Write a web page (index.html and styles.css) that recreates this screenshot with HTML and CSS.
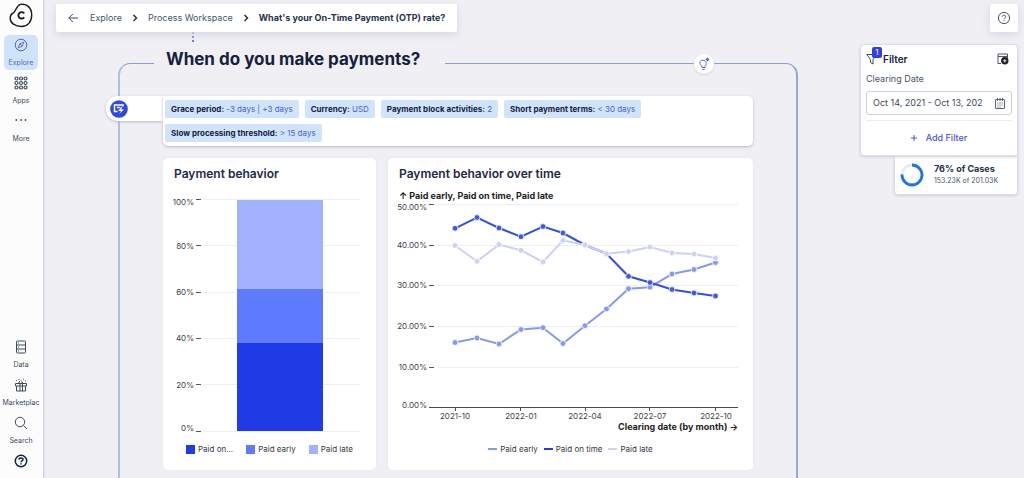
FILE: index.html
```html
<!DOCTYPE html>
<html lang="en">
<head>
<meta charset="utf-8">
<title>What's your On-Time Payment (OTP) rate?</title>
<link rel="stylesheet" href="styles.css">
</head>
<body>
<nav class="sidebar" aria-label="Main">
  <svg class="logo" width="24" height="25" viewBox="0 0 24 25" fill="none"><path d="M3.500 10.500C7 9 7 2.500 11.500 1.400C18 .2 22.700 5 22.700 12C22.700 19 18.500 23.500 12.500 23.500C6 23.500 1.200 20 1.200 15.500C1.200 13 1.800 11.300 3.500 10.500Z" stroke="#1c1c22" stroke-width="1.400"/><path d="M15.200 10.500A3.200 3.200 0 1 0 15.200 14.200" stroke="#1c1c22" stroke-width="1.900"/></svg>
  <div class="group">
    <a class="item active" href="#"><svg width="14" height="14" viewBox="0 0 14 14" fill="none" stroke="currentColor"><circle cx="7" cy="7" r="5.800"/><path d="M10 4L8.200 8.200L4 10L5.800 5.800ZM6 6L8 8" stroke-width=".9"/></svg><span>Explore</span></a>
    <a class="item" href="#"><svg width="14" height="14" viewBox="0 0 14 14" fill="none" stroke="currentColor" stroke-width="1.200"><circle cx="2.500" cy="2.500" r="1.500"/><circle cx="7" cy="2.500" r="1.500"/><circle cx="11.500" cy="2.500" r="1.500"/><circle cx="2.500" cy="7" r="1.500"/><circle cx="7" cy="7" r="1.500"/><circle cx="11.500" cy="7" r="1.500"/><circle cx="2.500" cy="11.500" r="1.500"/><circle cx="7" cy="11.500" r="1.500"/><circle cx="11.500" cy="11.500" r="1.500"/></svg><span>Apps</span></a>
    <a class="item" href="#"><svg width="14" height="14" viewBox="0 0 14 14" fill="currentColor"><circle cx="2.300" cy="6" r=".9"/><circle cx="7" cy="6" r=".9"/><circle cx="11.500" cy="6" r=".9"/></svg><span>More</span></a>
  </div>
  <div class="group bottom">
    <a class="item" href="#"><svg width="14" height="14" viewBox="0 0 14 14" fill="none" stroke="currentColor"><rect x="2.500" y="1" width="9" height="12" rx=".8"/><path d="M2.500 5H11.500M2.500 9H11.500M4 3H5M4 7H5M4 11H5"/></svg><span>Data</span></a>
    <a class="item" href="#"><svg width="14" height="14" viewBox="0 0 14 14" fill="none" stroke="currentColor"><path d="M1.500 5.500H12.500V8H1.500ZM2.500 8V13H11.500V8M6 5.500V13M8.500 5.500V13M4.500 4.500L6.500 5.500L9 4.500"/><path d="M2 2.500H3M4.500 1.500H5.500M7 3H8M9 1.200H10M11 3H12M5 3.500H6" stroke-width=".9"/></svg><span>Marketplac</span></a>
    <a class="item" href="#"><svg width="14" height="14" viewBox="0 0 14 14" fill="none" stroke="currentColor"><circle cx="6" cy="6" r="4.700"/><path d="M9.500 9.500L13 13"/></svg><span>Search</span></a>
    <a class="item" href="#" aria-label="Help"><svg width="14" height="14" viewBox="0 0 14 14" fill="none" stroke="#14213d" stroke-width="1.500"><circle cx="7" cy="7" r="5.700"/><path d="M5 5.600C5.100 3.300 9 3.400 9 5.500C9 6.900 7 6.800 7 8.300M7 9.300V10.600"/></svg></a>
  </div>
</nav>
<main class="main">
  <header class="topbar">
    <nav class="crumbs" aria-label="Breadcrumb">
      <button class="plain" aria-label="Back"><svg width="10" height="10" viewBox="0 0 10 10" fill="none" stroke="#3d4a5f"><path d="M10 5H.8M4.800 1L.8 5L4.800 9"/></svg></button>
      <a href="#">Explore</a>
      <svg width="6" height="8" viewBox="0 0 6 8" fill="none" stroke="#25324a" stroke-width="1.500"><path d="M1.500 1L4.500 4L1.500 7"/></svg>
      <a href="#">Process Workspace</a>
      <svg width="6" height="8" viewBox="0 0 6 8" fill="none" stroke="#25324a" stroke-width="1.500"><path d="M1.500 1L4.500 4L1.500 7"/></svg>
      <strong>What's your On-Time Payment (OTP) rate?</strong>
    </nav>
    <button class="help" aria-label="Help"><svg width="14" height="14" viewBox="0 0 14 14" fill="none" stroke="#48556a"><circle cx="7" cy="7" r="5.600"/><path d="M5.200 5.700C5.200 3.600 8.800 3.700 8.800 5.600C8.800 6.900 7 6.900 7 8.200M7 9.300V10.300"/></svg></button>
  </header>
  <div class="content">
    <section class="board">
      <div class="connector"></div>
      <h1>When do you make payments?</h1>
      <button class="insight" aria-label="Insights"><svg width="12" height="14" viewBox="0 0 12 14" fill="none" stroke="#4a5ac8" stroke-width=".9"><path d="M4 10.500V9.200C.5 7 1.800 3.200 5 3.200C8.200 3.200 9.500 7 7 9.200V10.500ZM4.300 12.500H6.700"/><path d="M9.500 .8V4.200M7.800 2.500H11.200" stroke-width="1.300"/></svg></button>
      <div class="params">
        <div class="pill"><svg width="18" height="18" viewBox="0 0 18 18"><circle cx="9" cy="9" r="8.800" fill="#2e48e2"/><path d="M13 6.500V5H4.500V11.500H7.500M7 7.500H10.500" fill="none" stroke="#fff" stroke-width="1.500"/><path d="M12 6.500L8 11H11L9 14L14 9.500H11.500Z" fill="#fff"/></svg></div>
        <div class="chips">
          <span class="chip"><b>Grace period:</b> -3 days | +3 days</span>
          <span class="chip"><b>Currency:</b> USD</span>
          <span class="chip"><b>Payment block activities:</b> 2</span>
          <span class="chip"><b>Short payment terms:</b> &lt; 30 days</span>
          <span class="chip"><b>Slow processing threshold:</b> &gt; 15 days</span>
        </div>
      </div>
      <div class="cards">
        <article class="card">
          <h2>Payment behavior</h2>
          <svg class="chart" viewBox="163 186 213 252" role="img" aria-label="Payment behavior">
            <path class="grid" d="M204 199.500H360M204 245.500H360M204 292.500H360M204 338.500H360M204 384.500H360M204 431.500H360"/>
            <path class="tick" d="M196 199.500H201M196 245.500H201M196 292.500H201M196 338.500H201M196 384.500H201M196 431.500H201"/>
            <g class="axis end"><text x="194" y="205">100%</text><text x="194" y="249">80%</text><text x="194" y="295">60%</text><text x="194" y="341">40%</text><text x="194" y="388">20%</text><text x="194" y="431">0%</text></g>
            <rect x="237" y="200" width="86" height="89" fill="#a2b2fd"/>
            <rect x="237" y="289" width="86" height="54" fill="#5e7afd"/>
            <rect x="237" y="343" width="86" height="88" fill="#203ae6"/>
          </svg>
          <ul class="legend">
            <li><i class="box on"></i>Paid on...</li>
            <li><i class="box early"></i>Paid early</li>
            <li><i class="box late"></i>Paid late</li>
          </ul>
        </article>
        <article class="card">
          <h2>Payment behavior over time</h2>
          <svg class="chart" viewBox="388 186 365 252" role="img" aria-label="Payment behavior over time">
            <text class="axis-title" x="399" y="199">↑ Paid early, Paid on time, Paid late</text>
            <path class="grid" d="M438 204.500H738M438 245.500H738M438 285.500H738M438 326.500H738M438 367.500H738"/>
            <path class="tick" d="M429 204.500H434M429 245.500H434M429 285.500H434M429 326.500H434M429 367.500H434"/>
            <path class="base" d="M429 407.500H738M455.500 407V411M520.500 407V411M585.500 407V411M649.500 407V411M715.500 407V411"/>
            <g class="axis end"><text x="427" y="210">50.00%</text><text x="427" y="248">40.00%</text><text x="427" y="288">30.00%</text><text x="427" y="329">20.00%</text><text x="427" y="370">10.00%</text><text x="427" y="408">0.00%</text></g>
            <g class="axis mid"><text x="455" y="419">2021-10</text><text x="521" y="419">2022-01</text><text x="585" y="419">2022-04</text><text x="650" y="419">2022-07</text><text x="716" y="419">2022-10</text></g>
            <text class="axis-title end" x="738" y="430">Clearing date (by month) →</text>
            <defs>
              <marker id="dot" markerWidth="7" markerHeight="7" refX="3.500" refY="3.500" markerUnits="userSpaceOnUse"><circle cx="3.500" cy="3.500" r="2.900" fill="#4059e2" stroke="#fff" stroke-width=".8"/></marker>
              <marker id="dot-early" markerWidth="7" markerHeight="7" refX="3.500" refY="3.500" markerUnits="userSpaceOnUse"><circle cx="3.500" cy="3.500" r="2.900" fill="#8799ec" stroke="#fff" stroke-width=".8"/></marker>
              <marker id="dot-late" markerWidth="7" markerHeight="7" refX="3.500" refY="3.500" markerUnits="userSpaceOnUse"><circle cx="3.500" cy="3.500" r="2.900" fill="#cdd1f6" stroke="#fff" stroke-width=".8"/></marker>
            </defs>
            <polyline class="series early-line" points="455,342.500 477,338 499,344 521,329.500 543,327.700 563,343.500 585,325.700 606.500,309 628.500,288.700 650,287.200 672,274 694,269.500 715.500,262.500"/>
            <polyline class="series on-line" points="455,228.300 477,217.500 499,228 521,236.700 543,226.500 563,233 585,245 606.500,253.700 628.500,276.300 650,282.500 672,289.500 694,293 715.500,296"/>
            <polyline class="series late-line" points="455,245.500 477,261.300 499,244.600 521,250.300 543,262 563,240.300 585,245 606.500,253.800 628.500,251.600 650,247 672,253 694,254 715.500,258"/>
          </svg>
          <ul class="legend lines">
            <li><i class="line early"></i>Paid early</li>
            <li><i class="line on"></i>Paid on time</li>
            <li><i class="line late"></i>Paid late</li>
          </ul>
        </article>
      </div>
    </section>
    <aside class="side">
      <section class="filter">
        <div class="filter-head">
          <span class="funnel"><svg width="12" height="12" viewBox="0 0 12 12" fill="none" stroke="#3d4a5f"><path d="M.8 1.500H10.500L7 6.500V11L4.500 9.500V6.500Z"/></svg><span class="badge">1</span></span>
          <h3>Filter</h3>
          <button class="plain" aria-label="Saved filters"><svg width="12" height="12" viewBox="0 0 12 12"><path d="M4 10.500H1V1H10.500V5M1 3.500H10.500" fill="none" stroke="#50545c"/><circle cx="7.800" cy="7.800" r="3.700" fill="#1c1d22"/><path d="M7.800 6V9.600M6 7.800H9.600" stroke="#fff" stroke-width=".8"/></svg></button>
        </div>
        <label for="date">Clearing Date</label>
        <div class="field">
          <input id="date" type="text" value="Oct 14, 2021 - Oct 13, 202">
          <svg width="10" height="11" viewBox="0 0 10 11" fill="none" stroke="#58647a"><rect x=".5" y="1.500" width="9" height="9" rx=".5"/><path d="M2.500 0V3M5 0V3M7.500 0V3"/><path d="M2.500 5H8M2.500 7H8M2.500 9H6" stroke-dasharray="1 1"/></svg>
        </div>
        <button class="add"><svg width="6" height="6" viewBox="0 0 6 6" stroke="#4a54da"><path d="M3 0V6M0 3H6"/></svg>Add Filter</button>
      </section>
      <section class="cases">
        <svg width="24" height="24" viewBox="0 0 24 24" fill="none" stroke-width="2.800"><circle cx="12" cy="12" r="10" stroke="#e9ebf2"/><circle cx="12" cy="12" r="10" stroke="#1f74ea" pathLength="100" stroke-dasharray="76 24" transform="rotate(-90 12 12)"/></svg>
        <div><strong>76% of Cases</strong><small>153.23K of 201.03K</small></div>
      </section>
    </aside>
  </div>
</main>
</body>
</html>
```
FILE: styles.css
```css
* { box-sizing: border-box; }
body {
  margin: 0;
  display: flex;
  height: 100vh;
  overflow: hidden;
  background: #efeff4;
  color: #14213d;
  font: 10px/12px Inter, "Liberation Sans", sans-serif;
}
a { color: inherit; text-decoration: none; }
button { font: inherit; border: 0; padding: 0; background: none; cursor: pointer; }
svg { display: block; flex: none; }
h1, h2, h3, ul { margin: 0; padding: 0; }
.plain { display: flex; }

.sidebar {
  flex: none;
  width: 43px;
  height: 100vh;
  overflow: hidden;
  display: flex;
  flex-direction: column;
  padding: 3px 4px 0;
  background: #fcfcfd;
  box-shadow: 1px 0 2px #c9cad6;
}
.logo { margin: 0 5px 7px; }
.group { display: flex; flex-direction: column; gap: 3px; }
.bottom { margin-top: auto; margin-bottom: -8px; }
.item {
  height: 35px;
  width: 34px;
  padding-top: 3px;
  display: flex;
  flex-direction: column;
  align-items: center;
  gap: 6px;
  border-radius: 5px;
  color: #3f4a5e;
  font-size: 7px;
  line-height: 10px;
}
.item span { white-space: nowrap; }
.item.active { background: #d0e3fd; color: #5269c4; }

.main { flex: 1; min-width: 0; display: flex; flex-direction: column; }
.topbar { display: flex; justify-content: space-between; padding: 4px 6px 0 13px; z-index: 1; }
.crumbs, .help { height: 28px; background: #fff; border-radius: 2px; box-shadow: 0 3px 8px #d6d7e0; }
.crumbs { display: flex; align-items: center; gap: 10px; padding: 0 12px; color: #48556a; font-size: 9px; white-space: nowrap; }
.crumbs .plain { margin-right: 2px; }
.crumbs strong { font-weight: 700; color: #25324a; }
.help { width: 28px; display: grid; place-items: center; }

.content { flex: 1; min-height: 0; display: flex; align-items: stretch; gap: 62px; padding: 0 6px 0 75px; }
.board {
  flex: 1;
  min-width: 0;
  position: relative;
  margin-top: 31px;
  padding: 0 43px;
  border: 2px solid #b0c0e2;
  border-top: 1px solid #8f9bd8;
  border-right-color: #98a4dd;
  border-bottom: 0;
  border-radius: 12px 12px 0 0;
}
.connector { position: absolute; left: 72px; top: -32px; height: 10px; border-left: 2px dotted #6575d8; }
h1 {
  width: max-content;
  margin: -19px 0 0 -9px;
  padding: 0 25px 0 12px;
  background: #efeff4;
  font-size: 17px;
  line-height: 28px;
  font-weight: 700;
}
.insight {
  position: absolute;
  right: 82px;
  top: -10px;
  width: 20px;
  height: 20px;
  display: grid;
  place-items: center;
  border-radius: 50%;
  background: #fff;
  box-shadow: 0 1px 2px #d0d1dc;
}
.params { display: flex; align-items: flex-start; margin: 23px 0 12px -57px; }
.pill { width: 57px; height: 25px; padding: 4px; border-radius: 12px 0 0 12px; background: #fff; box-shadow: 0 1px 3px #bbbcca; }
.chips {
  flex: 1;
  display: flex;
  flex-wrap: wrap;
  gap: 6px;
  padding: 4px 100px 4px 2px;
  background: #fff;
  border-radius: 0 5px 5px 5px;
  box-shadow: 0 1px 3px #bbbcca;
  position: relative;
}
.chip { padding: 0 6px; border-radius: 2px; background: #d0e4fe; color: #4c5fd0; font-size: 8px; line-height: 18px; white-space: nowrap; }
.chip b { color: #14213d; font-weight: 700; }

.cards { display: grid; grid-template-columns: 213fr 365fr; gap: 12px; }
.card { min-width: 0; padding-bottom: 15px; border-radius: 5px; background: #fff; box-shadow: 0 0 2px #e4e5ec; }
h2 { padding: 8px 11px 4px; font-size: 12px; line-height: 16px; font-weight: 600; color: #1b2947; }
.chart { width: 100%; height: auto; }
.grid { stroke: #eeeef1; }
.tick { stroke: #55565c; }
.base { stroke: #4a4b50; fill: none; }
.axis { font-size: 8px; fill: #414248; }
.end { text-anchor: end; }
.mid { text-anchor: middle; }
.axis-title { font-size: 9px; font-weight: 700; fill: #1d1e24; }
.series { fill: none; stroke-width: 2; }
.early-line { stroke: #8799ec; marker: url(#dot-early); }
.on-line { stroke: #3450dc; marker: url(#dot); }
.late-line { stroke: #cdd1f6; marker: url(#dot-late); }
.legend { display: flex; justify-content: center; gap: 13px; margin-top: 5px; list-style: none; font-size: 8px; color: #37383e; }
.legend li { display: flex; align-items: center; gap: 3px; }
.lines { gap: 6px; }
.box { width: 9px; height: 9px; }
.line { width: 9px; height: 2px; }
.on { background: #203ae6; }
.early { background: #5e7afd; }
.late { background: #a2b2fd; }
.line.early { background: #8799ec; }
.line.late { background: #cdd1f6; }

.side { flex: none; width: 158px; margin-top: 12px; display: flex; flex-direction: column; align-items: flex-end; }
.filter, .cases { background: #fff; border: 1px solid #dcdde5; box-shadow: 0 1px 3px #cfd0db; }
.filter { width: 100%; padding: 0 5px; border-radius: 4px 4px 0 4px; position: relative; }
.filter-head { display: flex; align-items: center; gap: 5px; height: 27px; }
.filter-head .plain { margin-left: auto; margin-right: 3px; }
.funnel { position: relative; }
.badge {
  position: absolute;
  left: 6px;
  top: -6px;
  width: 10px;
  height: 11px;
  border-radius: 2px;
  background: #2e3fe4;
  color: #fff;
  font-size: 8px;
  line-height: 11px;
  text-align: center;
}
h3 { font-size: 10px; font-weight: 600; }
label { display: block; font-size: 9px; line-height: 14px; color: #48556a; }
.field { display: flex; align-items: center; height: 24px; margin-top: 5px; padding: 0 6px; border: 1px solid #cfd1da; border-radius: 3px; }
.field input { flex: 1; min-width: 0; padding: 0; border: 0; outline: 0; background: none; color: #3a475c; font: inherit; font-size: 9px; }
.add { display: flex; align-items: center; justify-content: center; gap: 9px; width: 100%; height: 35px; margin-top: 5px; border-top: 1px solid #ebecf0; color: #4a54da; font-size: 9px; font-weight: 500; }
.cases { width: 124px; height: 39px; display: flex; align-items: center; gap: 10px; padding: 0 5px; border-top: 0; border-radius: 0 0 4px 4px; }
.cases strong { display: block; font-size: 9px; font-weight: 700; color: #25324a; white-space: nowrap; }
.cases small { display: block; font-size: 7px; color: #48556a; white-space: nowrap; }
```
